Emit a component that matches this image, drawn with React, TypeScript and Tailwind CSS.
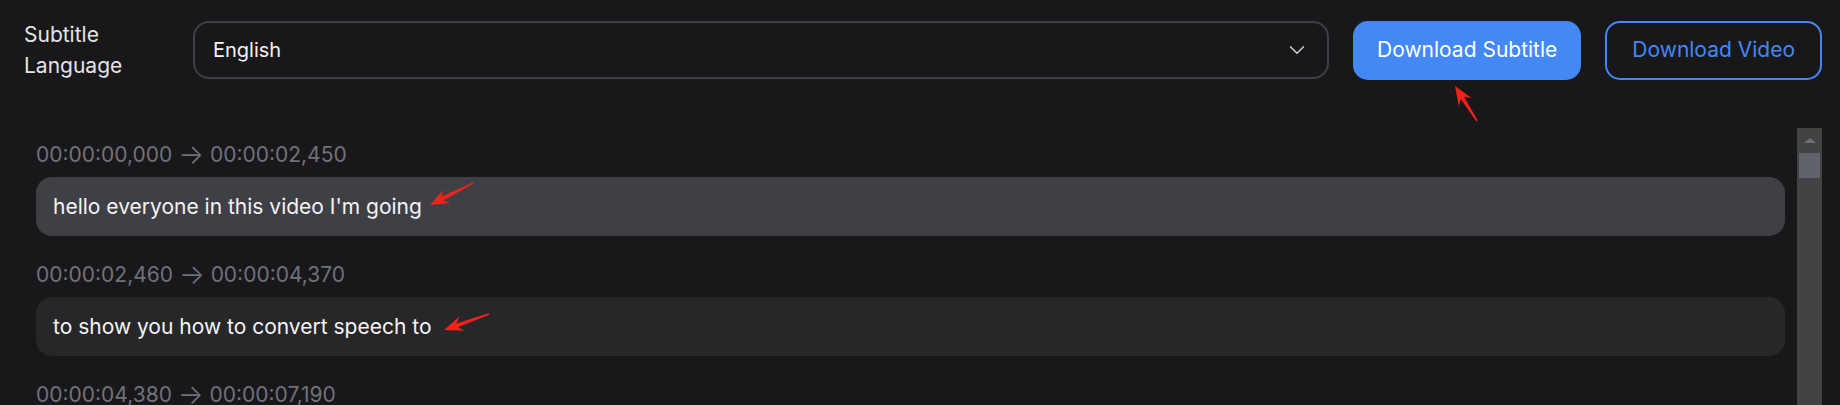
import { ChevronDown } from 'lucide-react';

const CUES = [
  { start: '00:00:00,000', end: '00:00:02,450', text: "hello everyone in this video I'm going", active: true },
  { start: '00:00:02,460', end: '00:00:04,370', text: 'to show you how to convert speech to', active: false },
  { start: '00:00:04,380', end: '00:00:07,190', text: 'text in just a few seconds', active: false },
];

// red annotation arrows: tip, tail
const ARROWS: [number, number, number, number][] = [
  [1455, 86, 1477, 121],
  [430, 205, 473, 183],
  [444, 330, 489, 314],
];

function arrowPoints([x, y, x2, y2]: [number, number, number, number]) {
  const len = Math.hypot(x2 - x, y2 - y);
  const ux = (x2 - x) / len;
  const uy = (y2 - y) / len;
  const nx = -uy;
  const ny = ux;
  const p = (a: number, b: number) => `${(x + ux * a + nx * b).toFixed(1)},${(y + uy * a + ny * b).toFixed(1)}`;
  return [p(0, 0), p(19, 7.5), p(14, 2), p(len, 0.7), p(len, -0.7), p(14, -2), p(19, -7.5)].join(' ');
}

function Cue({ start, end, text, active }: (typeof CUES)[number]) {
  return (
    <div>
      <div className="h-[28px] text-[21px] leading-[28px] text-[#71717a]">
        {start}{' '}
        <span className="inline-block h-[28px] align-top text-[27px] leading-[28px] font-light">→</span>{' '}
        {end}
      </div>
      <div
        className={`mt-2 rounded-2xl px-[17px] py-[15px] text-[21px] leading-[29px] text-[#f4f4f5] ${
          active ? 'bg-[#3f3f46]' : 'bg-[#27272a]'
        }`}
      >
        {text}
      </div>
    </div>
  );
}

export default function App() {
  return (
    <div className="relative h-[405px] overflow-hidden bg-[#18181b] pl-6 pr-[18px] font-['Inter',sans-serif]">
      <div className="flex items-center pt-[19px]">
        <div className="w-[145px] text-[21px] leading-[31px] text-[#e4e4e7]">
          Subtitle
          <br />
          Language
        </div>
        <div className="ml-6 flex h-[58px] flex-1 items-center justify-between rounded-2xl border-2 border-[#3f3f46] pl-[18px] pr-[17px] text-[20px] text-[#f4f4f5]">
          <span>English</span>
          <ChevronDown size={26} strokeWidth={1.3} className="text-[#d4d4d8]" />
        </div>
        <button className="ml-6 h-[59px] rounded-[15px] bg-[#4388f5] px-6 text-[21px] text-white">
          Download Subtitle
        </button>
        <button className="ml-6 h-[59px] rounded-[15px] border-2 border-[#4388f5] px-[25px] text-[21px] text-[#4388f5]">
          Download Video
        </button>
      </div>

      <div className="mt-[47px] flex h-[400px]">
        <div className="flex flex-1 flex-col gap-[25px] px-3 pt-[13px]">
          {CUES.map((c) => (
            <Cue key={c.start} {...c} />
          ))}
        </div>
        <div className="flex w-[25px] flex-col items-center bg-[#434343] pt-[10px]">
          <div className="h-0 w-0 border-x-[6px] border-b-[5px] border-x-transparent border-b-[#6b6e78]" />
          <div className="mt-[10px] h-[25px] w-[21px] bg-[#5f626b]" />
        </div>
      </div>

      <svg className="pointer-events-none absolute inset-0 h-full w-full">
        {ARROWS.map((a, i) => (
          <polygon key={i} points={arrowPoints(a)} fill="#f5221b" />
        ))}
      </svg>
    </div>
  );
}
